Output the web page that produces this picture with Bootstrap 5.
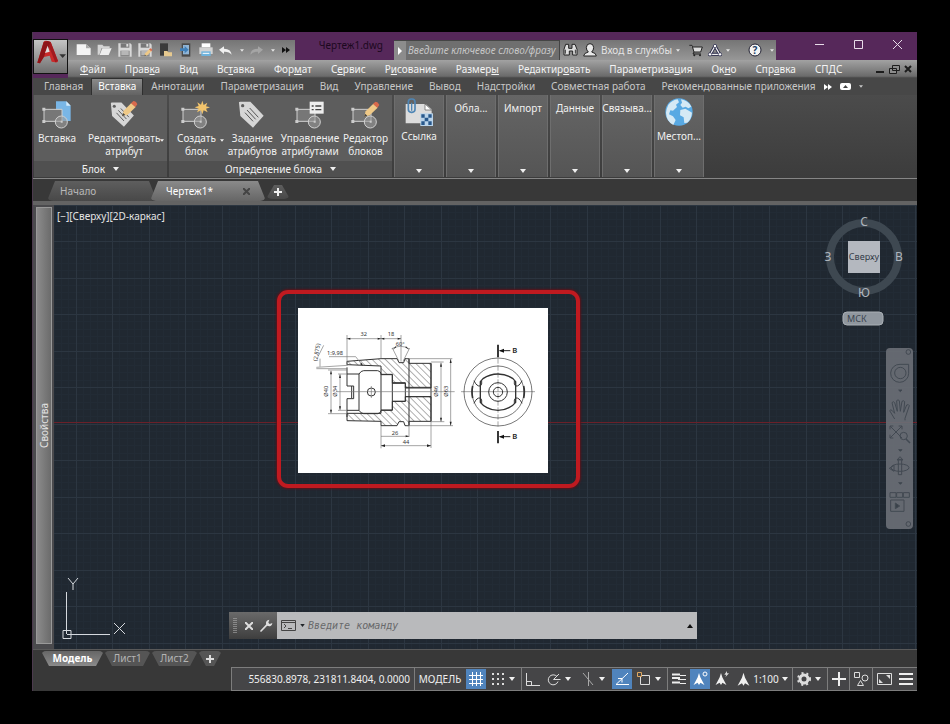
<!DOCTYPE html>
<html lang="ru">
<head>
<meta charset="utf-8">
<meta name="viewport" content="width=device-width, initial-scale=1">
<title>Чертеж1.dwg</title>
<link href="https://cdn.jsdelivr.net/npm/bootstrap@5.3.0/dist/css/bootstrap.min.css" rel="stylesheet">
<style>
body{background:#000;color:#e4e4e4;font-family:"Noto Sans","Open Sans",sans-serif;font-size:10px;line-height:13px;min-height:100vh;padding:32px 33px 32px 32px}
button{background:none;border:0;padding:0;color:inherit;font:inherit;line-height:inherit}
a{color:inherit;text-decoration:none}
svg{display:block;flex:none}
.app{background:#383838;border-left:1px solid #4c3a4e}
.head{background:#56285a}
.logo-btn{width:35px;height:35px;margin-top:7px;border:1px solid #111;background:linear-gradient(#c4c4c4,#6e6e6e)}
.title-row{height:28px}
.quick{width:227px;height:20px;gap:6px;padding:0 5px 0 8px;background:linear-gradient(#757575,#979797)}
.doc-name{color:#1c0820;padding:0 11px 4px 0}
.seek{width:166px;height:20px;background:#6f6f6f;border:1px solid #444;border-width:1px 1px 0 0}
.seek button{width:12px;height:19px;background:#8c8c8c}
.seek input{min-width:0;border:0;background:transparent;font-style:italic;color:#ddd;padding:0 2px;outline:0}
.seek input::placeholder{color:#c6c6c6}
.services{width:216px;height:20px;gap:5px;padding:0 2px 0 3px;background:linear-gradient(#757575,#979797)}
.sign-in{gap:4px}
.win button{width:39px;height:25px}
.menus{height:18px;background:linear-gradient(#a2a2a2,#6b6b6b 90%,#444);padding:0 4px 0 12px;color:#f4f4f4;gap:19px}
.menus u{text-underline-offset:1px}
.rtabs{height:17px;background:#474747;color:#c8c8c8;padding-left:3px}
.rtabs a{padding:2px 8px 0 8px;height:17px}
.rtabs a.on{background:linear-gradient(#8a8a8a,#636363);color:#fff;border:1px solid #2f2f2f;border-bottom:0;padding:1px 6px 0}
.ribbon{height:84px;background:linear-gradient(#4b4b4b,#3c3c3c);border-bottom:1px solid #868686;gap:2px;padding:0 0 1px 1px}
.panel{background:#5d5d5d;color:#f0f0f0}
.p-block{width:133px}
.p-define{width:223px}
.panel .tools{height:66px}
.panel .foot{height:16px;background:#505050}
.tool{text-align:center;padding-top:5px}
.tool svg.pic{margin:0 auto 2px}
.mini{width:50px;background:linear-gradient(#656565,#555);border:1px solid #6e6e6e;border-width:0 1px;color:#f0f0f0;padding:3px 0 4px}
.ftabs{height:22px;background:#383838;padding:2px 0 0 14px}
.ftab{clip-path:polygon(8px 0,calc(100% - 8px) 0,100% 100%,0 100%);background:linear-gradient(#5e5e5e,#484848);height:20px;border-radius:6px;color:#b9b9b9}
.ftab.on{background:linear-gradient(#8a8a8a,#666);color:#fff}
.f-start{width:110px;margin-right:-7px;padding-left:13px}
.f-doc{width:116px}
.f-new{width:24px;height:14px;margin-top:4px}
.band{height:4px;background:#636363}
.palette{width:21px;background:#4a4a4d;padding:2px 2px 5px 3px}
.palette>div{background:linear-gradient(90deg,#6b6b6b,#8b8b8b);border:1px solid #999;writing-mode:vertical-rl;transform:rotate(180deg)}
.board{background:#202831;height:444px;overflow:hidden}
.grid-bg{position:absolute;left:0;top:0}
.vp{position:absolute;left:3px;top:5px}
.frame{position:absolute;left:223px;top:85px;width:303px;height:198px;border:4px solid #c01a20;border-radius:11px;box-shadow:0 0 2px 1px #5d1219}
.sheet{position:absolute;left:244px;top:103px}
.cube{position:absolute;right:11px;top:9px}
.nav-bar{position:absolute;right:4px;top:143px;width:27px;height:181px;border-radius:4px;background:#6c7077;opacity:.9}
.ucs{position:absolute;left:6px;bottom:7px}
.cmd{position:absolute;left:175px;top:407px;width:468px;height:27px;background:#b9babc}
.cmd-l{width:48px;height:27px;background:linear-gradient(#6a6a6a,#3e3e3e)}
.cmd input{background:transparent;border:0;outline:0;font-style:italic;min-width:0;padding:0 3px;font-family:"DejaVu Sans Mono","Liberation Mono",monospace}
.cmd input::placeholder{color:#68696b;opacity:1}
.ltabs{height:18px;padding:1px 0 0 8px;border-top:1px solid #595959}
.ltab{width:47px;height:15px;clip-path:polygon(0 0,100% 0,calc(100% - 8px) 100%,8px 100%);border-radius:5px;background:#555;color:#b4b4b4}
.ltab.on{width:63px;background:linear-gradient(#666,#8a8a8a);color:#fff;font-weight:700}
.ltab.add{width:24px}
.status{height:24px;background:#454547;border:1px solid #7d7d7d;border-right:0;color:#f0f0f0}
.status>*{height:22px}
.status .s12{width:12px}.status .s22{width:22px}.status .s23{width:23px}
.status .coords{width:182px}.status .space{width:51px}.status .scale{width:59px}
.status .sep{border-left:1px solid #7d7d7d}
.status .on{background:#5084bd;border:1px solid #454547}
</style>
</head>
<body>
<svg width="0" height="0" class="position-absolute" aria-hidden="true"><defs>
<symbol id="dn" viewBox="0 0 6 4"><path d="M0 0h6L3 4z" fill="currentColor"/></symbol>
<symbol id="flop" viewBox="0 0 42 42"><path d="M1 1h36l4 4v36H1z" fill="#d8d8d8"/><path d="M8 1h26v13H8z" fill="#777"/><path d="M25 3h6v8h-6z" fill="#ddd"/><path d="M7 23h28v18H7z" fill="#888"/><path d="M10 27h22M10 33h22" stroke="#e5e5e5" stroke-width="3"/></symbol>
<symbol id="blk" viewBox="0 0 90 90"><path d="M6 28h54v36H6z" fill="#777" stroke="#d0d0d0" stroke-width="3"/><circle cx="58" cy="66" r="18" fill="#9a9a9a" fill-opacity=".6" stroke="#d0d0d0" stroke-width="3"/><path d="M1 23h9v9H1zM1 60h9v9H1zM56 62h6v6h-6z" fill="#ccc"/></symbol>
<symbol id="tag" viewBox="0 0 90 90"><path d="M6 8q-1-3 4-3h30l40 42-32 36L10 48z" fill="#d6d6d6"/><circle cx="17" cy="17" r="5" fill="#5d5d5d"/><path d="M30 30l26 28M38 24l26 28M24 38l24 26" stroke="#555" stroke-width="3"/></symbol>
<symbol id="pen" viewBox="0 0 50 50"><path d="M2 47l5-17 23-23 13 12-24 23z" fill="#efc987"/><path d="M2 47l3-10 7 6z" fill="#444"/><path d="M29 8l7-7q8 0 12 10l-6 8z" fill="#d86a4c"/></symbol>
<symbol id="man" viewBox="0 0 42 48"><path d="M21 2l5 16 14 26-14-8-5 8-5-8-14 8 14-26z" fill="currentColor"/></symbol>
</defs></svg>

<div class="app d-flex flex-column">
<header class="head d-flex">
 <button class="logo-btn d-flex align-items-center" aria-label="Меню приложения">
  <svg width="33" height="33" viewBox="10 29 99 99"><path d="M20 97L39 35q2-5 12-3l9 3 22 57q0 5-8 4l-11-2-6-18-21 5-8 18z" fill="#c92a2a"/><path d="M39 35l12-3 9 3-5 22-6-6-9 29-12 19-8-2z" fill="#8e1418"/><path d="M43 68l8-22 6 18z" fill="#ddd"/><path d="M60 35l22 57-8 4-20-49z" fill="#a21a1f"/><path d="M86 72h20l-10 11z" fill="#333"/></svg>
 </button>
 <div class="flex-grow-1">
  <div class="title-row d-flex">
   <div class="quick d-flex align-items-center align-self-end">
    <button aria-label="Новый"><svg width="15" height="14" viewBox="136 38 45 42"><path d="M138 42h28l14 12v20h-42z" fill="#f4f4f4"/><path d="M166 42v12h14z" fill="#aaa"/></svg></button>
    <button aria-label="Открыть"><svg width="15" height="14" viewBox="197 38 45 42"><path d="M199 43h14l4 5h18v5h-24l-7 20h-5z" fill="#d4d4d4"/><path d="M213 54h28l-9 20h-27z" fill="#eee"/></svg></button>
    <button aria-label="Сохранить"><svg width="14" height="14"><use href="#flop"/></svg></button>
    <button aria-label="Сохранить как"><svg width="15" height="14" viewBox="0 0 45 42"><use href="#flop" width="42" height="42"/><use href="#pen" x="18" y="14" width="26" height="28"/></svg></button>
    <button aria-label="Открыть с устройства"><svg width="14" height="14" viewBox="0 0 42 42"><path d="M3 1h24v37H3z" fill="#3b3b3b"/><path d="M15 24h10l3 4h11v12H15z" fill="#e6c98f"/></svg></button>
    <button aria-label="Сохранить на устройстве"><svg width="14" height="14" viewBox="0 0 42 42"><path d="M8 1h26v40H8z" fill="#4a4a4a"/><path d="M12 6h18v28H12z" fill="#8fb4d6"/><path d="M3 16h14v-7l12 11-12 11v-7H3z" fill="#3f7fb8"/></svg></button>
    <button aria-label="Печать"><svg width="14" height="14" viewBox="0 0 42 42"><path d="M8 1h26v12H8z" fill="#fff"/><path d="M1 13h40v20H1z" fill="#d2d2d2"/><path d="M7 25h28v14H7z" fill="#6fb3dc"/><path d="M11 31h20" stroke="#fff" stroke-width="3"/></svg></button>
    <button class="d-flex align-items-center gap-2" aria-label="Отменить"><svg width="13" height="9" viewBox="0 0 39 27"><path d="M0 11L15 1v7q21 0 23 18-8-10-23-9v7z" fill="#f0f0f0"/></svg><svg width="4" height="3"><use href="#dn"/></svg></button>
    <button class="d-flex align-items-center gap-2" aria-label="Повторить"><svg width="13" height="9" viewBox="0 0 39 27"><path d="M39 11L24 1v7Q3 8 1 26q8-10 23-9v7z" fill="#a5a5a5"/></svg><svg width="4" height="3"><use href="#dn"/></svg></button>
    <button class="ms-auto" aria-label="Ещё"><svg width="8" height="6" viewBox="0 0 8 6"><path d="M0 0l4 3-4 3zM4 0l4 3-4 3z" fill="#111"/></svg></button>
   </div>
   <div class="doc-name flex-grow-1 d-flex align-items-end justify-content-end"><span class="pb-1">Чертеж1.dwg</span></div>
   <div class="seek d-flex align-self-end">
    <button class="d-flex align-items-center justify-content-center" aria-label="Свернуть поиск"><svg width="4" height="8" viewBox="0 0 4 8"><path d="M0 0l4 4-4 4z" fill="#fff"/></svg></button>
    <input class="flex-grow-1" type="text" aria-label="Поиск" placeholder="Введите ключевое слово/фразу">
   </div>
   <div class="services d-flex align-items-center align-self-end">
    <button aria-label="Найти"><svg width="15" height="14" viewBox="790 37 45 42"><path d="M793 73V56l5-15h9v12h10V41h9l6 15v17h-13V61h-10v12z" fill="#ddd" stroke="#222" stroke-width="3"/><path d="M797 57v12M827 57v12" stroke="#333" stroke-width="3"/></svg></button>
    <button class="sign-in d-flex align-items-center"><svg width="14" height="14" viewBox="0 0 42 42"><path d="M2 39q0-9 14-12-6-5-6-14 1-11 11-11t11 11q0 9-6 14 14 3 14 12z" fill="#e8e8e8" stroke="#222" stroke-width="3"/></svg><span>Вход в службы</span><svg width="4" height="3"><use href="#dn"/></svg></button>
    <button class="ms-1" aria-label="Магазин"><svg width="14" height="13" viewBox="0 0 42 39"><path d="M1 4h8l6 20h20l5-15H12" fill="#ddd" stroke="#222" stroke-width="3"/><path d="M15 24l-3 6h24" fill="none" stroke="#222" stroke-width="3"/><circle cx="16" cy="34" r="3" fill="#222"/><circle cx="33" cy="34" r="3" fill="#222"/></svg></button>
    <button class="d-flex align-items-center gap-1" aria-label="Autodesk App Store"><svg width="14" height="13" viewBox="0 0 42 39"><path d="M21 6L7 31h28z" fill="none" stroke="#224" stroke-width="9"/><path d="M21 6L7 31h28z" fill="none" stroke="#eee" stroke-width="4"/><g fill="#fff" stroke="#224" stroke-width="2"><circle cx="21" cy="6" r="5"/><circle cx="6" cy="31" r="5"/><circle cx="36" cy="31" r="5"/></g></svg><svg width="4" height="3"><use href="#dn"/></svg></button>
    <button class="d-flex align-items-center gap-2 ms-auto" aria-label="Справка"><svg width="14" height="14" viewBox="0 0 14 14"><circle cx="7" cy="7" r="6" fill="#f4f4f4" stroke="#223"/><text x="7" y="11" text-anchor="middle" font-size="10" font-weight="700" fill="#223f66">?</text></svg><svg width="4" height="3"><use href="#dn"/></svg></button>
   </div>
   <div class="win d-flex ms-4 text-white">
    <button aria-label="Свернуть"><svg class="mx-auto" width="9" height="9"><path d="M0 4.500h9" stroke="#e8dce9"/></svg></button>
    <button aria-label="Развернуть"><svg class="mx-auto" width="9" height="9"><path d="M.5.5h8v8h-8z" fill="none" stroke="#e8dce9"/></svg></button>
    <button aria-label="Закрыть"><svg class="mx-auto" width="9" height="9"><path d="M0 0l9 9M9 0L0 9" stroke="#e8dce9"/></svg></button>
   </div>
  </div>
  <nav class="menus d-flex align-items-center" aria-label="Главное меню">
   <a href="#"><u>Ф</u>айл</a><a href="#">Прав<u>к</u>а</a><a href="#">Ви<u>д</u></a><a href="#">Вс<u>т</u>авка</a><a href="#">Фор<u>м</u>ат</a><a href="#">С<u>е</u>рвис</a><a href="#">Р<u>и</u>сование</a><a href="#">Размер<u>ы</u></a><a href="#">Редактир<u>о</u>вать</a><a href="#">Параметриза<u>ц</u>ия</a><a href="#">Ок<u>н</u>о</a><a href="#">Спр<u>а</u>вка</a><a href="#">СПДС</a>
   <div class="ms-auto d-flex gap-1">
    <button aria-label="Свернуть документ"><svg width="10" height="10"><path d="M1 8h8" stroke="#1c1c1c" stroke-width="2"/></svg></button>
    <button aria-label="Восстановить документ"><svg width="11" height="10"><path d="M3.500 1.500h7v5h-7zM.5 4.500h7v5h-7z" fill="#8c8c8c" stroke="#1c1c1c"/></svg></button>
    <button aria-label="Закрыть документ"><svg width="9" height="10"><path d="M1 2l6 6M7 2L1 8" stroke="#1c1c1c" stroke-width="2"/></svg></button>
   </div>
  </nav>
 </div>
</header>

<nav class="rtabs d-flex" aria-label="Лента">
 <a href="#">Главная</a><a href="#" class="on" aria-current="page">Вставка</a><a href="#">Аннотации</a><a href="#">Параметризация</a><a href="#">Вид</a><a href="#">Управление</a><a href="#">Вывод</a><a href="#">Надстройки</a><a href="#">Совместная работа</a><a href="#">Рекомендованные приложения</a>
 <button class="d-flex align-items-center gap-2" aria-label="Параметры ленты"><svg width="8" height="6" viewBox="0 0 8 6"><path d="M0 0l4 3-4 3zM4 0l4 3-4 3z" fill="#fff"/></svg><svg width="11" height="7" viewBox="0 0 11 7"><rect width="11" height="7" rx="2" fill="#fff"/><path d="M3 5l2.500-3L8 5z" fill="#444"/></svg><svg width="4" height="3"><use href="#dn"/></svg></button>
</nav>

<div class="ribbon d-flex">
 <section class="panel p-block">
  <div class="tools d-flex align-items-start">
   <button class="tool px-1"><svg class="pic" width="30" height="30" viewBox="0 0 90 90"><path d="M42 4h31l13 13v46H42z" fill="#79b6e6"/><path d="M73 4v13h13z" fill="#d7ecfb"/><use href="#blk" width="90" height="90"/></svg>Вставка</button>
   <button class="tool ps-2 d-flex align-items-end"><span><svg class="pic" width="30" height="30" viewBox="0 0 90 90"><use href="#tag" width="84" height="90"/><use href="#pen" x="36" y="2" width="52" height="50"/></svg>Редактировать<br>атрибут</span><svg class="mb-3" width="4" height="3"><use href="#dn"/></svg></button>
  </div>
  <button class="foot w-100 d-flex align-items-center justify-content-center gap-2">Блок <svg width="6" height="4"><use href="#dn"/></svg></button>
 </section>
 <section class="panel p-define">
  <div class="tools d-flex align-items-start justify-content-between px-1">
   <button class="tool ps-1 d-flex align-items-end"><span><svg class="pic" width="30" height="30" viewBox="0 0 90 90"><use href="#blk" width="90" height="90"/><path d="M64 2l4 13 11-7-4 11 12 3-12 4 5 11-12-6-4 12-4-12-12 6 5-11-12-4 12-4-4-11 11 7z" fill="#f2c46c"/></svg>Создать<br>блок</span><svg class="mb-3 ms-1" width="4" height="3"><use href="#dn"/></svg></button>
   <button class="tool"><svg class="pic" width="30" height="30"><use href="#tag"/></svg>Задание<br>атрибутов</button>
   <button class="tool"><svg class="pic" width="30" height="30" viewBox="0 0 90 90"><use href="#blk" width="90" height="90"/><path d="M44 5h42v36H44z" fill="#eee"/><path d="M50 18h6M61 18h18M50 29h6M61 29h18" stroke="#444" stroke-width="4"/></svg>Управление<br>атрибутами</button>
   <button class="tool"><svg class="pic" width="30" height="30" viewBox="0 0 90 90"><use href="#blk" width="90" height="90"/><use href="#pen" x="36" y="4" width="52" height="50"/></svg>Редактор<br>блоков</button>
  </div>
  <button class="foot w-100 d-flex align-items-center justify-content-center gap-2">Определение блока <svg width="6" height="4"><use href="#dn"/></svg></button>
 </section>
 <button class="mini d-flex flex-column align-items-center"><svg width="28" height="28" viewBox="74 26 84 84"><path d="M76 44h60l18 16v42H76z" fill="#dcdcdc"/><path d="M134 44v18h20z" fill="#fff" stroke="#555" stroke-width="2"/><rect x="84" y="29" width="20" height="40" rx="9" fill="none" stroke="#4f86b5" stroke-width="5"/><path d="M94 40v24" stroke="#4f86b5" stroke-width="4"/><path d="M120 72h38v38h-38z" fill="#b9d3ea"/><path d="M123 75h10v10h-10zM144 75h10v10h-10zM133 85h11v11h-11zM123 96h10v11h-10zM144 96h10v11h-10z" fill="#28588c"/></svg><span class="mt-1">Ссылка</span><svg class="mt-auto" width="6" height="4"><use href="#dn"/></svg></button>
 <button class="mini d-flex flex-column align-items-center"><span class="pt-1">Обла...</span><svg class="mt-auto" width="6" height="4"><use href="#dn"/></svg></button>
 <button class="mini d-flex flex-column align-items-center"><span class="pt-1">Импорт</span><svg class="mt-auto" width="6" height="4"><use href="#dn"/></svg></button>
 <button class="mini d-flex flex-column align-items-center"><span class="pt-1">Данные</span><svg class="mt-auto" width="6" height="4"><use href="#dn"/></svg></button>
 <button class="mini d-flex flex-column align-items-center"><span class="pt-1">Связыва...</span><svg class="mt-auto" width="6" height="4"><use href="#dn"/></svg></button>
 <button class="mini d-flex flex-column align-items-center"><svg width="28" height="28" viewBox="0 0 84 84"><circle cx="42" cy="42" r="41" fill="#58a9e3"/><path d="M10 20Q22 6 38 4l4 9-9 7 3 7-12 11-8-1-4 12 12 6 8 11-7 15Q4 70 3 44 4 32 10 20zM48 4q22 4 31 22l-9 5-8-5-9 3-7-8 5-7zM46 36l15-4 13 8 7 4q-2 20-14 30l-9 1-2-17-11-6z" fill="#d5e9f5"/></svg><span class="mt-1">Местоп...</span><svg class="mt-auto" width="6" height="4"><use href="#dn"/></svg></button>
</div>

<div class="ftabs d-flex">
 <button class="ftab f-start text-start">Начало</button>
 <button class="ftab f-doc on d-flex align-items-center justify-content-between ps-3 pe-3">Чертеж1* <svg width="7" height="7"><path d="M0 0l7 7M7 0L0 7" stroke="#444" stroke-width="2"/></svg></button>
 <button class="ftab f-new d-flex align-items-center justify-content-center" aria-label="Новый чертеж"><svg width="8" height="8"><path d="M4 0v8M0 4h8" stroke="#eee" stroke-width="2"/></svg></button>
</div>
<div class="band"></div>

<main class="d-flex">
 <div class="palette d-flex"><div class="flex-grow-1 d-flex align-items-center justify-content-center">Свойства</div></div>
 <div class="board flex-grow-1 position-relative">
  <svg class="grid-bg" width="100%" height="100%"><defs><pattern id="gr" x="-15" y="-37" width="73" height="73" patternUnits="userSpaceOnUse"><path d="M7.500 0v73M15.500 0v73M22.500 0v73M29.500 0v73M44.500 0v73M51.500 0v73M58.500 0v73M66.500 0v73M0 7.500h73M0 15.500h73M0 22.500h73M0 29.500h73M0 44.500h73M0 51.500h73M0 58.500h73M0 66.500h73" stroke="#222b35"/><path d="M.5 0v73M37.500 0v73M0 .5h73M0 37.500h73" stroke="#2c3641"/></pattern></defs><rect width="100%" height="100%" fill="url(#gr)"/><path d="M0 217.500h4000" stroke="#6b2029"/></svg>
  <div class="vp">[−][Сверху][2D-каркас]</div>
  <div class="frame"></div>
  <svg class="sheet" width="250" height="165" viewBox="85 84 750 495" role="img" aria-label="Чертеж детали">
   <defs><pattern id="ht" width="14" height="14" patternUnits="userSpaceOnUse" patternTransform="rotate(-45)"><path d="M7 0v14" stroke="#888" stroke-width="2"/></pattern></defs>
   <rect x="85" y="84" width="750" height="495" fill="#fff"/>
   <path d="M334 236h48l6 12h14l4-12h12v14h66v74h-77v-14h-39v-26h-34v-26l-102-4v-10l102-8zM334 437h48l6-12h14l4 12h12v-13h66v-74h-77v14h-39v26h-34v10H232v22l102 2z" fill="url(#ht)" stroke="#333" stroke-width="3"/>
   <path d="M232 262v56h14v38h-14v55M232 282h36q6-10 14-10h42q8 0 11 11h33v108h-33q-3 10-11 10h-42q-8 0-14-10h-36M268 282v109M334 282v109M368 308h39v56h-39M407 322h77M407 350h77M484 250v174M418 236v201M246 318h6v38h-6" fill="none" stroke="#333" stroke-width="3"/>
   <circle cx="305" cy="336" r="12" fill="none" stroke="#333" stroke-width="3"/>
   <g fill="none" stroke="#777" stroke-width="2">
    <path d="M200 335h355M574 335h222M232 165v90M334 165v70M394 165v80M230 176h164M366 206q26-14 52 0M368 204l20 40M420 204l-20 40M178 230h80l22 28M140 262l94-6M140 266h92M146 228l16-32M151 236v24M175 270h57M175 401h57M184 272v128M205 282h27M205 391h27M211 283v107M410 236h138M484 246h38M514 248v177M484 425h40M410 437h140M543 237v200M334 437v68M418 437v34M484 424v80M334 469h84M334 497h150M305 318v36"/>
    <path d="M685 235v204" stroke-dasharray="16 5"/></g>
   <path d="M232 176l10-3v6zM334 176l-10-3v6zM334 176l10-3v6zM394 176l-10-3v6zM184 272l-3 11h6zM184 400l-3-11h6zM211 283l-3 11h6zM211 390l-3-11h6zM514 248l-3 12h6zM514 425l-3-12h6zM543 237l-3 12h6zM543 437l-3-12h6zM334 497l12-4v8zM484 497l-12-4v8zM418 469l-10-3v6zM280 258l-9-6 5-3zM369 209l11-7-2-3zM418 209l-11-7 2-3z" fill="#222"/>
   <g fill="none" stroke="#333" stroke-width="2"><circle cx="685" cy="336" r="102"/><circle cx="685" cy="336" r="78"/><circle cx="685" cy="336" r="28" stroke-width="3"/><circle cx="685" cy="336" r="14" stroke-width="3"/>
   <path d="M632 305l8-9q20-14 45-14t45 14l8 9v62q-8 10-20 16-14 8-33 8t-33-8q-12-6-20-16z" stroke-width="4"/>
   <path d="M613 302q8 18 19 16 6-4 4-16M757 302q-8 18-19 16-6-4-4-16M613 370q8-18 19-16 6 4 4 16M757 370q-8-18-19-16-6 4-4 16" stroke-width="3"/><path d="M609 318q-4 18 0 36M762 318q4 18 0 36" stroke-width="5"/></g>
   <path d="M685 194v38M685 453v37" stroke="#111" stroke-width="5"/><path d="M690 212h32M690 470h32" stroke="#222" stroke-width="3"/><path d="M688 212l15-6v12zM688 470l15-6v12z" fill="#111"/>
   <g fill="#333" font-size="17" text-anchor="middle"><text x="282" y="169">32</text><text x="364" y="169">18</text><text x="392" y="198">60°</text><text x="196" y="224">1:9,98</text><text x="376" y="464">26</text><text x="409" y="492">44</text>
    <text transform="translate(147 218) rotate(-80)">(2,875)</text><text transform="translate(176 334) rotate(-90)">Ø40</text><text transform="translate(202 334) rotate(-90)">Ø34</text><text transform="translate(506 334) rotate(-90)">Ø46</text><text transform="translate(534 334) rotate(-90)">Ø63</text></g>
   <g fill="#222" font-size="23" font-weight="600"><text x="728" y="220">B</text><text x="728" y="478">B</text></g>
  </svg>
  <svg class="cube" width="84" height="114" viewBox="0 0 84 114" role="img" aria-label="Видовой куб"><circle cx="42" cy="43" r="34" fill="none" stroke="#3e4851" stroke-width="8"/><path d="M26 27h32v32H26z" fill="#b4b8bf"/><g text-anchor="middle"><text x="42" y="46" font-size="9" fill="#333b48">Сверху</text><g font-size="12" fill="#aeb5bd"><text x="42" y="12">С</text><text x="6" y="47">З</text><text x="77" y="47">В</text><text x="42" y="83">Ю</text></g></g><rect x="21" y="98" width="40" height="13" rx="4" fill="#90979f" stroke="#a9afb5"/><text x="25" y="108" font-size="9" fill="#39434e">МСК</text></svg>
  <div class="nav-bar"><svg width="27" height="181" viewBox="48 24 81 543" fill="none" stroke="#464d56" stroke-width="3"><circle cx="115" cy="36" r="7"/><circle cx="115" cy="552" r="7"/><path d="M116 73H90a27 27 0 1 0 26 27z"/><circle cx="91" cy="99" r="17"/><path d="M86 150h10l-5 5zM86 329h10l-5 5zM86 428h10l-5 5z" fill="#3d444d"/><path d="M74 237l-15-25q3-5 8 0l7 8-8-32q4-6 8 0l8 26-2-32q4-5 8 0l3 32 5-30q5-4 8 1l-3 32 9-22q6-3 8 2l-13 38v6M60 258l36 36M96 258l-36 36M60 268v-10h10M60 284v10h10M86 258h10v10"/><circle cx="101" cy="288" r="11"/><path d="M108 297l12 12" stroke-width="5"/><ellipse cx="90" cy="383" rx="27" ry="11"/><path d="M85 358h10v46H85zM90 350l-9 10h18zM72 376v18l-14-9z"/><path d="M60 458h18v14H60zM80 458h18v14H80zM100 458h18v14h-18zM62 480h40v34H62z"/><path d="M76 489v17l13-8z" fill="#3d444d"/></svg></div>
  <svg class="ucs" width="66" height="66" viewBox="0 0 66 66" fill="none" stroke="#d5d9de"><path d="M6.500 16v42M7 58.500h43M3 54.500h8v8H3zM54 47l11 11M65 47L54 58M8 2l5 6 5-6M13 8v6"/></svg>
  <div class="cmd d-flex align-items-center">
   <div class="cmd-l d-flex align-items-center justify-content-between px-1"><svg width="4" height="16"><path d="M1 0v16M3 0v16" stroke="#bbb" stroke-dasharray="1 1"/></svg><button aria-label="Закрыть"><svg width="8" height="8"><path d="M0 0l8 8M8 0L0 8" stroke="#ddd" stroke-width="2"/></svg></button><button aria-label="Настройка"><svg width="13" height="13" viewBox="0 0 39 39"><path d="M3 36l19-20" stroke="#ddd" stroke-width="5" stroke-linecap="round"/><path d="M28 2q-12 2-10 13 4 9 14 6 5-3 5-9l-8 3-4-4z" fill="#ddd"/></svg></button></div>
   <button class="d-flex align-items-center gap-1 ps-1" aria-label="Последние команды"><svg width="15" height="11"><path d="M.5.5h14v10H.5zM.5 2.500h14M3 4l2 2-2 2M7 8.500h4" fill="none" stroke="#444"/></svg><svg width="5" height="3" class="text-dark"><use href="#dn"/></svg></button>
   <input class="flex-grow-1" type="text" aria-label="Команда" placeholder="Введите команду">
   <button class="pe-1" aria-label="История"><svg width="6" height="4"><path d="M0 4h6L3 0z" fill="#111"/></svg></button>
  </div>
 </div>
</main>

<nav class="ltabs d-flex" aria-label="Листы">
 <button class="ltab on">Модель</button><button class="ltab">Лист1</button><button class="ltab">Лист2</button><button class="ltab add" aria-label="Новый лист"><svg class="mx-auto" width="8" height="8"><path d="M4 0v8M0 4h8" stroke="#ddd" stroke-width="2"/></svg></button>
</nav>

<footer class="status d-flex ms-auto">
 <div class="coords d-flex align-items-center justify-content-end pe-1">556830.8978, 231811.8404, 0.0000</div>
 <button class="space sep">МОДЕЛЬ</button>
 <button class="s22 on" aria-label="Сетка"><svg class="mx-auto" width="14" height="14"><path d="M3.500 0v14M7.500 0v14M11.500 0v14M0 3.500h14M0 7.500h14M0 11.500h14" stroke="#fff"/></svg></button>
 <button class="s22" aria-label="Привязка"><svg class="mx-auto" width="12" height="12"><path d="M0 1h12M0 6h12M0 11h12" stroke="#ddd" stroke-width="2" stroke-dasharray="2 3"/></svg></button>
 <button class="s12" aria-label="Ещё"><svg width="6" height="4"><use href="#dn"/></svg></button>
 <button class="s22 sep" aria-label="Орто"><svg class="mx-auto" width="14" height="13"><path d="M.5 0v12.500H14M.5 8.500h5v4" fill="none" stroke="#ddd"/></svg></button>
 <button class="s22" aria-label="Полярное"><svg class="mx-auto" width="14" height="13"><path d="M11 8.500a5 5 0 1 1-1-5M6.500 6.500h7M6.500 6.500L12 1" fill="none" stroke="#ddd"/></svg></button>
 <button class="s12" aria-label="Ещё"><svg width="6" height="4"><use href="#dn"/></svg></button>
 <button class="s22" aria-label="Изометрия"><svg class="mx-auto" width="12" height="14"><path d="M1 1l10 12M6.500 0v14" stroke="#aaa"/></svg></button>
 <button class="s12" aria-label="Ещё"><svg width="6" height="4"><use href="#dn"/></svg></button>
 <button class="s22 on" aria-label="Отслеживание"><svg class="mx-auto" width="14" height="12"><path d="M13 0L1 11.500h13M3 5.500h4v4" fill="none" stroke="#fff"/></svg></button>
 <button class="s22" aria-label="Объектная привязка"><svg class="mx-auto" width="14" height="14"><path d="M3.500 3.500h9v9h-9z" fill="none" stroke="#ddd"/><path d="M.5.5h4v4h-4z" fill="#454547" stroke="#e0a860"/></svg></button>
 <button class="s12" aria-label="Ещё"><svg width="6" height="4"><use href="#dn"/></svg></button>
 <button class="s22 sep" aria-label="Вес линий"><svg class="mx-auto" width="14" height="12"><path d="M0 1.500h8M0 5h8M0 9.500h8" stroke="#eee" stroke-width="2"/><path d="M8 2.500h6M6 6.500h8M8 10.500h6" stroke="#eee"/></svg></button>
 <button class="s22 on" aria-label="Показ аннотаций"><svg class="mx-auto" width="15" height="16" viewBox="0 0 45 48"><use href="#man" width="36" height="46" y="2" color="#fff"/><circle cx="36" cy="9" r="6" fill="none" stroke="#fff" stroke-width="3"/></svg></button>
 <button class="s22" aria-label="Автомасштаб"><svg class="mx-auto" width="15" height="16" viewBox="0 0 45 48"><use href="#man" width="36" height="46" y="2"/><path d="M36 0l-8 11h6l-3 8 11-12h-6z" fill="#ddd"/></svg></button>
 <button class="scale d-flex align-items-center justify-content-between px-1"><svg width="13" height="15"><use href="#man"/></svg><span>1:100</span><svg width="6" height="4"><use href="#dn"/></svg></button>
 <button class="s23 sep" aria-label="Рабочее пространство"><svg class="mx-auto" width="14" height="14"><circle cx="7" cy="7" r="4" fill="none" stroke="#ddd" stroke-width="3"/><circle cx="7" cy="7" r="6" fill="none" stroke="#ddd" stroke-width="2" stroke-dasharray="2 3"/></svg></button>
 <button class="s12" aria-label="Ещё"><svg width="6" height="4"><use href="#dn"/></svg></button>
 <button class="s22 sep" aria-label="Монитор аннотаций"><svg class="mx-auto" width="14" height="14"><path d="M7 0v14M0 7h14" stroke="#eee" stroke-width="2"/></svg></button>
 <button class="s23 sep" aria-label="Изоляция объектов"><svg class="mx-auto" width="15" height="14"><path d="M.5.5h5v5h-5zM3.500 13.500h6l-3-5z" fill="none" stroke="#ddd"/><circle cx="11" cy="6" r="3" fill="none" stroke="#ddd"/></svg></button>
 <button class="s23 sep" aria-label="Очистить экран"><svg class="mx-auto" width="15" height="12"><path d="M.5.5h14v11H.5z" fill="none" stroke="#ddd"/><path d="M9 2h4v4zM2 6v4h4z" fill="#ddd"/></svg></button>
 <button class="s22" aria-label="Адаптация"><svg class="mx-auto" width="14" height="12"><path d="M0 1h14M0 6h14M0 11h14" stroke="#eee" stroke-width="2"/></svg></button>
</footer>
</div>
<script src="https://cdn.jsdelivr.net/npm/bootstrap@5.3.0/dist/js/bootstrap.bundle.min.js"></script>
</body>
</html>
